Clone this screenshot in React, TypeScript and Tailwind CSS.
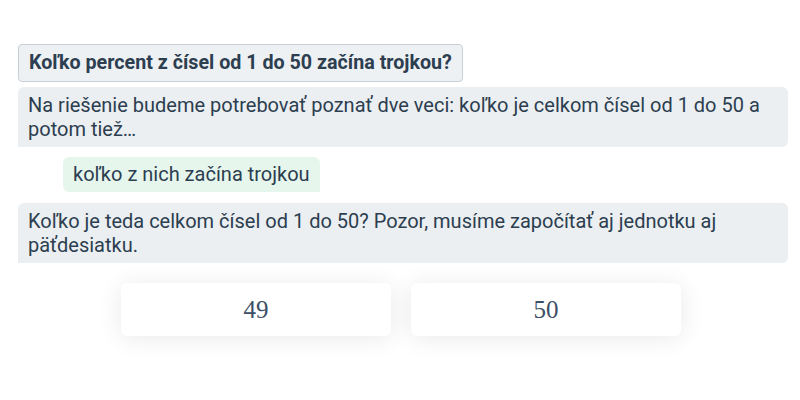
import React from 'react';

const text = 'text-[#2c3e50]';

const App: React.FC = () => {
  return (
    <div className="min-h-[400px] w-[800px] bg-white font-['Roboto','Liberation_Sans',sans-serif]">
      <div className="flex flex-col items-start pl-[18px] pr-3 pt-[44px]">
        {/* Question */}
        <div className={`rounded-[4px] border border-[#c8cfd6] bg-[#eef1f3] px-[10px] py-[6px] text-[19.7px] font-bold leading-6 ${text}`}>
          Koľko percent z čísel od 1 do 50 začína trojkou?
        </div>

        {/* Bot message */}
        <div className={`mt-[5px] w-full rounded-[6px] rounded-bl-none bg-[#ebeff1] px-[10px] py-[6px] text-[20px] leading-6 ${text}`}>
          Na riešenie budeme potrebovať poznať dve veci: koľko je celkom čísel od 1 do 50 a potom tiež…
        </div>

        {/* User reply */}
        <div className={`ml-[45px] mt-[10px] rounded-[6px] rounded-br-none bg-[#e6f6ec] px-[10px] py-[5px] text-[20px] leading-[25px] ${text}`}>
          koľko z nich začína trojkou
        </div>

        {/* Bot message */}
        <div className={`mt-[11px] w-full rounded-[6px] rounded-bl-none bg-[#ebeff1] px-[10px] py-[6px] text-[20px] leading-6 ${text}`}>
          Koľko je teda celkom čísel od 1 do 50? Pozor, musíme započítať aj jednotku aj päťdesiatku.
        </div>
      </div>

      {/* Answer options */}
      <div className="mt-5 flex justify-center gap-5 pl-[2px]">
        {['49', '50'].map((n) => (
          <button
            key={n}
            className="flex h-[53px] w-[270px] items-center justify-center rounded-[6px] bg-white text-[25px] text-[#3b4f66] shadow-[0_2px_24px_rgba(0,0,0,0.09)] font-['Liberation_Serif',serif]"
          >
            {n}
          </button>
        ))}
      </div>
    </div>
  );
};

export default App;
